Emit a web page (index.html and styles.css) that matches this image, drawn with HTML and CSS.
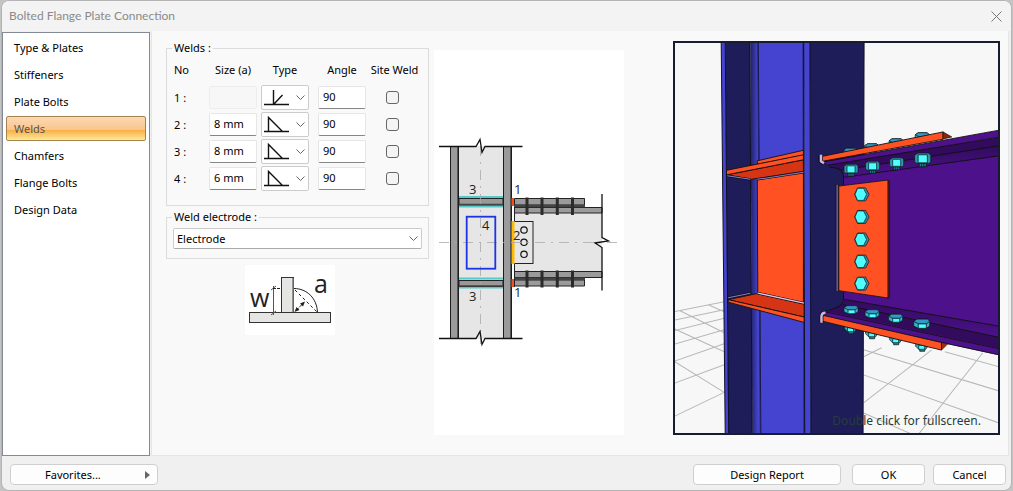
FILE: index.html
```html
<!DOCTYPE html>
<html lang="en">
<head>
<meta charset="utf-8">
<title>Bolted Flange Plate Connection</title>
<link rel="stylesheet" href="styles.css">
</head>
<body>
<main class="dialog">
  <header class="titlebar">
    <h1 class="title">Bolted Flange Plate Connection</h1>
    <button class="close" type="button" aria-label="Close"><svg width="11" height="11" viewBox="0 0 11 11"><path d="M.5 .5l10 10M10.5 .5l-10 10" fill="none" stroke="#777"/></svg></button>
  </header>
  <div class="body">
    <nav class="nav">
      <a href="#type">Type &amp; Plates</a>
      <a href="#stiffeners">Stiffeners</a>
      <a href="#plate-bolts">Plate Bolts</a>
      <a href="#welds" class="active" aria-current="page">Welds</a>
      <a href="#chamfers">Chamfers</a>
      <a href="#flange-bolts">Flange Bolts</a>
      <a href="#data">Design Data</a>
    </nav>
    <section class="content">
      <div class="settings">
        <fieldset class="group">
          <legend>Welds :</legend>
          <table class="welds">
            <thead><tr><th class="no">No</th><th>Size (a)</th><th>Type</th><th class="angle">Angle</th><th class="site">Site Weld</th></tr></thead>
            <tbody>
              <tr><td class="no">1 :</td>
                <td><input class="field" type="text" aria-label="Size of weld 1" disabled></td>
                <td><span class="type"><select aria-label="Type of weld 1"><option aria-label="Bevel"></option></select><svg class="symbol" viewBox="0 0 26 18"><path d="M0 16.5h25M9.500 2v14.500M9.500 16.500l9-9.500" /></svg><svg class="chevron" viewBox="0 0 9 5"><path d="M.5 .5l4 4 4-4"/></svg></span></td>
                <td class="angle"><input class="field" type="text" value="90" aria-label="Angle of weld 1"></td>
                <td class="site"><input class="check" type="checkbox" aria-label="Site weld 1"></td></tr>
              <tr><td class="no">2 :</td>
                <td><input class="field" type="text" value="8 mm" aria-label="Size of weld 2"></td>
                <td><span class="type"><select aria-label="Type of weld 2"><option aria-label="Fillet"></option></select><svg class="symbol" viewBox="0 0 26 18"><path d="M0 16.500h25M4.500 16V2.500l14 14"/></svg><svg class="chevron" viewBox="0 0 9 5"><path d="M.5 .5l4 4 4-4"/></svg></span></td>
                <td class="angle"><input class="field" type="text" value="90" aria-label="Angle of weld 2"></td>
                <td class="site"><input class="check" type="checkbox" aria-label="Site weld 2"></td></tr>
              <tr><td class="no">3 :</td>
                <td><input class="field" type="text" value="8 mm" aria-label="Size of weld 3"></td>
                <td><span class="type"><select aria-label="Type of weld 3"><option aria-label="Fillet"></option></select><svg class="symbol" viewBox="0 0 26 18"><path d="M0 16.500h25M4.500 16V2.500l14 14"/></svg><svg class="chevron" viewBox="0 0 9 5"><path d="M.5 .5l4 4 4-4"/></svg></span></td>
                <td class="angle"><input class="field" type="text" value="90" aria-label="Angle of weld 3"></td>
                <td class="site"><input class="check" type="checkbox" aria-label="Site weld 3"></td></tr>
              <tr><td class="no">4 :</td>
                <td><input class="field" type="text" value="6 mm" aria-label="Size of weld 4"></td>
                <td><span class="type"><select aria-label="Type of weld 4"><option aria-label="Fillet"></option></select><svg class="symbol" viewBox="0 0 26 18"><path d="M0 16.500h25M4.500 16V2.500l14 14"/></svg><svg class="chevron" viewBox="0 0 9 5"><path d="M.5 .5l4 4 4-4"/></svg></span></td>
                <td class="angle"><input class="field" type="text" value="90" aria-label="Angle of weld 4"></td>
                <td class="site"><input class="check" type="checkbox" aria-label="Site weld 4"></td></tr>
            </tbody>
          </table>
        </fieldset>
        <fieldset class="group electrode">
          <legend>Weld electrode :</legend>
          <span class="combo"><select aria-label="Weld electrode"><option>Electrode</option></select><svg class="chevron" viewBox="0 0 9 5"><path d="M.5 .5l4 4 4-4"/></svg></span>
        </fieldset>
        <svg class="legend-art" viewBox="245 264 90 70" role="img" aria-label="Weld size">
          <rect x="245" y="264" width="90" height="70" fill="#fff"/>
          <g fill="#e5e5e3" stroke="#333"><rect x="281.500" y="276.500" width="12" height="35.500"/><rect x="249.500" y="311.500" width="81" height="10"/></g>
          <path d="M293 277v34" stroke="#777" stroke-width="1.500"/>
          <g fill="none" stroke="#222"><path d="M294 287.500c13 0 23 10 23.500 24"/><path d="M295 289l22 22" stroke-dasharray="3 2.500"/><path d="M273.500 285v29M271 289l5-4M271 314l5-4" stroke="#555"/><path d="M273 287.500h8" stroke-dasharray="3 1"/><path d="M296 309.500l8-8" stroke-dasharray="4 1"/></g>
          <path d="M294.500 311l2-5 3 3zM305 300.500l-2 5-3-3z" fill="#222"/>
          <text x="250" y="306" class="art-big">w</text><text x="314" y="292" class="art-big">a</text>
        </svg>
      </div>

      <svg class="section-art" viewBox="434 50 190 385" role="img" aria-label="Weld positions">
        <rect x="434" y="50" width="190" height="385" fill="#fff"/>
        <path d="M459 146h44v193h-44zM514 213h88v59h-88z" fill="#e6e6e6"/>
        <g><path d="M450 146h9v193h-9zM503 146h9v193h-9z" fill="#9b9b9b"/><path d="M457 146h2v193h-2zM510 146h2v193h-2z" fill="#555"/><path d="M450.500 146v193M458.500 146v193M503.500 146v193M511.500 146v193" stroke="#1c1c1c"/></g>
        <path d="M459 197h44M459 206.500h44M459 278.500h44M459 287.500h44" stroke="#56c9c9" stroke-width="2"/>
        <path d="M459 198.500h44v6.500h-44zM459 280.500h44v6h-44z" fill="#999" stroke="#222"/>
        <path d="M459 204.500h44M459 286h44" stroke="#444" stroke-width="1.500"/>
        <path d="M514.500 207.500H602v5.500h-87.500zM514.500 271.500H602v6h-87.500z" fill="#9b9b9b" stroke="#222"/>
        <path d="M514.500 198.500h70v6.500h-70zM514.500 280h70v6h-70z" fill="#9b9b9b" stroke="#222"/>
        <path d="M514 206h71M514 278.700h71" stroke="#444" stroke-width="2.500"/>
        <path d="M527 197.500v17.500M542 197.500v17.500M557.300 197.500v17.500M572.500 197.500v17.500M527 270.500v17M542 270.500v17M557.300 270.500v17M572.500 270.500v17" stroke="#2b2b2b" stroke-width="3"/>
        <path d="M514.500 207v80" stroke="#222"/>
        <rect x="513.500" y="221.500" width="19.500" height="42" fill="#e6e6e6" stroke="#222"/>
        <path d="M511.500 221h3v43h-3z" fill="#fb0"/><path d="M511.500 198h2.500v8h-2.500zM511.500 279h2.500v8h-2.500z" fill="#f4511e"/>
        <g fill="#e6e6e6" stroke="#111" stroke-width="1.200"><circle cx="524" cy="230" r="3.200"/><circle cx="524" cy="242.300" r="3.200"/><circle cx="524" cy="254.300" r="3.200"/></g>
        <path d="M480.500 146v198M439 242.500h180" stroke="#a9a9a9" stroke-width=".8" stroke-dasharray="10 6 2 6" fill="none"/>
        <rect x="466.700" y="216.700" width="28.600" height="52" fill="none" stroke="#1c33e6" stroke-width="1.800"/>
        <path d="M439 146.500h37l4-7 2 13 3-6h37.500M439 338.500h37l4-7 2 13 3-6h37.500M602 194v43.500l6.500 3.500-13.500 2 7 4.500V290.500" fill="none" stroke="#111" stroke-width="1.300"/>
        <g class="art-label"><text x="469" y="194">3</text><text x="514" y="194">1</text><text x="482" y="230">4</text><text x="513" y="240">2</text><text x="469" y="301">3</text><text x="514" y="297">1</text></g>
      </svg>

      <div class="view">
        <svg class="scene" viewBox="675 43 324 389" preserveAspectRatio="xMidYMid slice" role="img" aria-label="Connection model">
          <defs>
            <linearGradient id="fillet"><stop offset="0" stop-color="#202060"/><stop offset=".75" stop-color="#4544d1"/></linearGradient>
            <linearGradient id="root" x2="0" y2="1"><stop offset="0" stop-color="#310b5d"/><stop offset="1" stop-color="#4d128b"/></linearGradient>
            <g id="hex" stroke="#101820" stroke-width=".7"><path d="M-4-6.500H4L7.500 0 4 6.500H-4L-7 0z" fill="#2f91b5"/><path d="M-4-6H2L5 0 2 6H-4L-6.500 0z" fill="#4fffff"/></g>
            <g id="nut" stroke="#101820" stroke-width=".7"><path d="M-3 3h6v4h-6z" fill="#247e8e"/><path d="M-7-3L-4-5H5L7-3V3L5 4H-5L-7 3z" fill="#2d99aa"/><path d="M-4-3.500H4V3.500H-4z" fill="#4fffff"/><path d="M-1 4v3M1 4v3" fill="none"/></g>
            <g id="head" stroke="#101820" stroke-width=".7"><path d="M-7-2L-4-4H5L7-2V2L4 4H-3L-7 2z" fill="#2ab8c4"/><path d="M-3 0H4V4H-3z" fill="#4fffff"/><path d="M-7-2L-4-4H5L7-2 4 0H-3z" fill="#339ac8"/></g>
            <g id="tip" stroke="#101820" stroke-width=".7"><path d="M-6-4V0L-3 3H4L6 0V-4z" fill="#2fb0b6"/><path d="M-3-1H3V3H-3z" fill="#4fffff"/><path d="M-2 3V5H3V3" fill="#217881"/></g>
          </defs>
          <rect x="600" y="0" width="480" height="500" fill="#f7f7f7"/>
          <g fill="none" stroke="#b5b8b5" stroke-width="1"><path d="M675 311l50-10M675 319.500l50-10.500M675 330l50-12.500M675 343.500l50-14.500M675 360.500l50-17.500M675 382.500l50-18.500M675 415.500l50-24M675 360.500l50 31M675 328l50 23M681 310l44 22M709 304l16 7"/><path d="M864 349l135 41M864 374l135 48M864 412l50 22M945 351l54 15M932 349l-68 53M983 352l-64 81M864 356l18-9"/></g>

          <path d="M722 43h4l3.300 390H726z" fill="#4544d1"/><path d="M726 43h25l2 390h-24z" fill="#1e1d59"/>
          <path d="M751 43h8l2.500 390h-8.500z" fill="url(#fillet)"/><path d="M759 43h45l1 390h-43.500z" fill="#4544d1"/>
          <path d="M803 43h1.500l1 390H804z" fill="#27256f"/><path d="M804.500 43h6l1 390h-6z" fill="#4544d1"/><path d="M810.500 43h54l-1 390h-52z" fill="#1e1d59"/>
          <path d="M722 43l4 390M726 43l3.500 390M750.500 43l2.300 390M759 43l2.500 390M804.300 43l1 390M810.500 43l1 390M864.500 43l-1 390" fill="none" stroke="#0f0f25"/>
          <path d="M758.500 43l2.500 390" stroke="#24236f"/>

          <g stroke="#111" stroke-width=".9">
            <path d="M758 179.500l46-7.500v130l-45.500-10z" fill="#ff5122"/>
            <path d="M758 160.500l46-10.500v5l-46 9z" fill="#ff5122"/>
            <path d="M727.300 174.500L804 159.500v11.500L752 179z" fill="#d53515"/><path d="M727.300 170L804 154.500v5L727.300 174.500z" fill="#ff5122"/>
            <path d="M729 299l28-6 47.700 10.300v13z" fill="#d53515"/><path d="M729 299l75.700 17.300v5.400L729 301.500z" fill="#ff5122"/>
          </g>
          <path d="M728 175.500l23 3.500M758 179l46-7M729 297l22-4.500" stroke="#111" stroke-width="2.200"/><path d="M728 175.500l23 3.500M758 179l46-7M729 297l22-4.500" stroke="#897cc8"/><path d="M758.500 292.500l46 10" stroke="#111" stroke-width="2.500"/><path d="M758.500 292.500l46 10" stroke="#e0c3ee" stroke-width="1.400"/>

          <g><use href="#head" x="851" y="152"/><use href="#head" x="872" y="147.500"/><use href="#head" x="896.500" y="142.500"/><use href="#head" x="922.500" y="136.500"/></g>
          <path d="M843.500 176L999 154v173l-155.500-28z" fill="#4d128b"/>
          <path d="M832 168L999 145v11l-155 21-2-6z" fill="url(#root)"/>
          <path d="M825 163.500L999 137v9L841 170z" fill="#330b5c"/>
          <path d="M825 161.500L999 130v7l-171 27.500z" fill="#4d128b"/>
          <path d="M825 161.500L999 130M828 165l171-28M841 170l158-24.500M844 177l155-21.500" fill="none" stroke="#111" stroke-width=".9"/>
          <path d="M823 156l120.300-24.300v7.300L823 161z" fill="#ff5122" stroke="#111" stroke-width=".9"/><path d="M943.300 131.700l8.700 5-8.700 2z" fill="#8e240c" stroke="#111" stroke-width=".7"/>
          <path d="M821 155v6l3 2" fill="none" stroke="#111" stroke-width="4"/><path d="M821.500 154.500v6.500l3 2" fill="none" stroke="#d0b6e6" stroke-width="2.500"/>
          <path d="M826 166h5q9 0 12 5l1 6V299q-1 6-8 8l-10 3z" fill="#1e1d59"/><path d="M830 167q13 0 14 9V298q0 7-8 9" fill="none" stroke="#111"/>
          <g><use href="#nut" x="851.500" y="169"/><use href="#nut" x="873" y="166"/><use href="#nut" x="897" y="162.500"/><use href="#nut" transform="translate(923 158.500) scale(1.150)"/></g>

          <g><use href="#tip" x="851" y="328"/><use href="#tip" x="872" y="333"/><use href="#tip" x="896" y="339"/><use href="#tip" x="922" y="345.500"/></g>
          <path d="M844 298.500l155 27v12l-156-33z" fill="url(#root)"/><path d="M825 311l19-7 155 32.500v11.500l-173-37z" fill="#330b5c"/><path d="M825 310l174 37.500v7L825 316.500z" fill="#4d128b"/>
          <path d="M844 298.500l155 27M844 304l155 32.500M840 306l-15 5 174 37M825 316.500L999 354" fill="none" stroke="#111" stroke-width=".9"/>
          <path d="M823 314.500l118.700 27.200v7.600L823 320.500z" fill="#ff5122" stroke="#111" stroke-width=".9"/><path d="M941.700 341.700l6.300 1.300-6.300 6.300z" fill="#a32c0d" stroke="#111" stroke-width=".7"/>
          <path d="M826 312q-4 0-4 4v6" fill="none" stroke="#111" stroke-width="4"/><path d="M826 312q-4 0-4 4v6" fill="none" stroke="#d0b6e6" stroke-width="2.400"/>
          <g><use href="#head" x="851.500" y="309"/><use href="#head" x="872.500" y="313"/><use href="#head" x="896" y="317.500"/><use href="#head" transform="translate(922 323) scale(1.150)"/></g>
          <path d="M836.500 184h2.500v107h-2.500z" fill="#65579b" stroke="#111" stroke-width=".7"/><path d="M888 180l2 1v116l-2 1z" fill="#6d1b10" stroke="#111" stroke-width=".6"/><path d="M839.300 185.700l49-6v117.600l-49-7.300z" fill="#ff5122" stroke="#111" stroke-width=".8"/>
          <g><use href="#hex" x="862" y="194"/><use href="#hex" x="862" y="216.500"/><use href="#hex" x="862" y="239"/><use href="#hex" x="862" y="261"/><use href="#hex" x="862" y="283"/></g>
        </svg>
        <p class="hint">Double click for fullscreen.</p>
      </div>
    </section>
  </div>
  <footer class="footer">
    <button class="btn favorites" type="button"><span>Favorites...</span><svg width="5" height="8" viewBox="0 0 5 8"><path d="M0 0l5 4-5 4z" fill="#666"/></svg></button>
    <button class="btn wide" type="button">Design Report</button>
    <button class="btn" type="button">OK</button>
    <button class="btn" type="button">Cancel</button>
  </footer>
</main>
</body>
</html>
```
FILE: styles.css
```css
* { box-sizing: border-box; }
body {
  margin: 0;
  padding: 0 1px 1px;
  min-height: 100vh;
  display: flex;
  background: linear-gradient(90deg, #c4c4c4 72%, #9355b4 72%, #9355b4 88%, #c4c4c4 88%);
  font: 11px/14px "Noto Sans", "Open Sans", sans-serif;
  color: #000;
}
button, input, select { font: inherit; color: inherit; }
.dialog {
  flex: 1;
  min-width: 0;
  display: flex;
  flex-direction: column;
  border: 1px solid #b4b4b4;
  border-radius: 8px;
  background: #f0f0f0;
  overflow: hidden;
}
.titlebar {
  height: 30px;
  padding: 0 9px 0 7px;
  display: flex;
  align-items: center;
  justify-content: space-between;
  background: #f3f3f3;
}
.title { margin: 0; font: 12px/16px Lato, sans-serif; color: #8a8a8a; }
.close { border: 0; padding: 0; background: none; display: flex; }
.body { flex: 1; display: flex; padding-right: 2px; }
.nav {
  width: 148px;
  margin-top: 1px;
  padding: 2px 3px;
  border: 1px solid #838995;
  background: #fff;
}
.nav a {
  display: block;
  height: 25px;
  margin-bottom: 2px;
  padding: 5px 7px;
  border: 1px solid transparent;
  border-radius: 2px;
  color: #000;
  text-decoration: none;
}
.nav .active {
  color: #555;
  border-color: #a58351;
  background: linear-gradient(#fbd9b5, #fac58c 55%, #f9ac45 56%, #fddc82 90%, #fdeaa0);
}
.content {
  flex: 1;
  margin-left: 1px;
  padding: 10px 8px 20px 14px;
  display: grid;
  grid-template-columns: 263px 190px minmax(0, 1fr);
  column-gap: 5px;
  background: #f9f9f9;
  border: 1px solid #e6e6e6;
  border-top: 0;
}
.settings { display: flex; flex-direction: column; }
.group {
  margin: 0;
  padding: 0 6px;
  min-width: 0;
  border: 1px solid #dcdcdc;
}
.group legend { margin-left: -1px; padding: 0 2px; height: 14px; }
.welds { width: 100%; table-layout: fixed; border-collapse: collapse; }
.welds th, .welds td { padding: 0; font-weight: normal; text-align: center; }
.welds th { height: 29px; white-space: nowrap; }
.welds td { height: 27px; vertical-align: middle; }
.welds .no { width: 34px; text-align: left; padding-left: 1px; }
.welds .angle { padding-left: 6px; width: 56px; }
.welds .site { width: 55px; }
.welds td.site { padding-right: 4px; }
.field {
  display: block;
  width: 48px;
  height: 23px;
  margin: auto;
  padding: 0 4px 2px;
  border: 1px solid #e6e6e6;
  border-bottom-color: #868686;
  border-radius: 2px;
  background: #fff;
}
.field:disabled { background: #f7f7f7; border-color: #ededed; }
.type, .combo { display: block; position: relative; margin: auto; }
.type { width: 48px; height: 25px; }
.type select, .combo select {
  display: block;
  width: 100%;
  height: 100%;
  appearance: none;
  border: 1px solid #ccc;
  border-radius: 2px;
  background: #fff;
}
.symbol {
  position: absolute;
  left: 3px;
  top: 3px;
  width: 26px;
  height: 18px;
  fill: none;
  stroke: #111;
  stroke-width: 1.400;
  pointer-events: none;
}
.chevron {
  position: absolute;
  right: 4px;
  top: 10px;
  width: 9px;
  height: 5px;
  fill: none;
  stroke: #666;
  pointer-events: none;
}
.check {
  display: block;
  appearance: none;
  width: 13px;
  height: 13px;
  margin: auto;
  border: 1px solid #666;
  border-radius: 3px;
  background: #f4f4f4;
}
.group:first-child { padding-bottom: 13px; }
.electrode { margin-top: 4px; padding-bottom: 9px; }
.combo { height: 21px; margin-top: 4px; }
.combo select { padding: 0 3px; border-bottom-color: #aaa; }
.combo .chevron { top: 8px; }
.legend-art { width: 90px; height: 70px; margin: 6px 0 0 79px; }
.art-big { font: 25px "Open Sans", sans-serif; fill: #222; }
.section-art { width: 190px; height: 385px; margin-top: 9px; }
.art-label { font: 13px "Open Sans", sans-serif; fill: #222; }
.view {
  position: relative;
  margin-left: 44px;
  border: 2px solid #181c30;
  background: #f7f7f7;
  overflow: hidden;
}
.scene { position: absolute; width: 100%; height: 100%; }
.hint {
  position: absolute;
  right: 17px;
  bottom: 4px;
  margin: 0;
  font: 12px/16px "Noto Sans", sans-serif;
  color: #263c3c;
  white-space: nowrap;
}
.footer {
  height: 34px;
  padding: 8px 5px 4px 8px;
  display: flex;
  gap: 8px;
}
.btn {
  width: 73px;
  height: 21px;
  padding: 0;
  border: 1px solid #cfcfcf;
  border-radius: 4px;
  background: #fdfdfd;
}
.btn.wide { width: 148px; margin-right: 3px; }
.favorites {
  width: 148px;
  margin-right: auto;
  padding: 0 7px 0 34px;
  display: flex;
  align-items: center;
  justify-content: space-between;
}
```
